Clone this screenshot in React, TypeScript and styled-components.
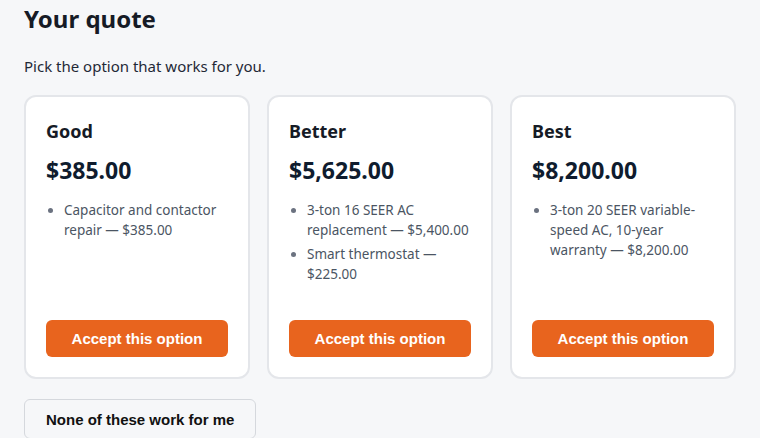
import styled, { createGlobalStyle } from "styled-components";

const GlobalStyle = createGlobalStyle`
    body {
        margin: 0;
        background: #f6f7f9;
        font-family: "Segoe UI", "Noto Sans", "Open Sans", sans-serif;
        color: #111827;
    }
`;

const Page = styled.div`
    padding: 0 24px;
`;

const Title = styled.h1`
    margin: 0;
    padding-top: 2px;
    font-size: 24px;
    line-height: 34px;
    font-weight: 700;
    color: #161b26;
`;

const Subtitle = styled.p`
    margin: 20px 0 0;
    font-size: 15px;
    line-height: 20px;
    color: #1f2937;
`;

const Options = styled.div`
    display: grid;
    grid-template-columns: repeat(3, 1fr);
    gap: 17px;
    margin-top: 19px;
`;

const Card = styled.div`
    display: flex;
    flex-direction: column;
    height: 284px;
    box-sizing: border-box;
    padding: 20px 20px 20px;
    background: #ffffff;
    border: 2px solid #e4e6ea;
    border-radius: 12px;
`;

const Tier = styled.h2`
    margin: 2px 0 0;
    font-size: 18px;
    line-height: 24px;
    font-weight: 700;
    color: #161b26;
`;

const Price = styled.div`
    margin-top: 12px;
    font-size: 23px;
    line-height: 30px;
    font-weight: 700;
    color: #0f1c2e;
`;

const Items = styled.ul`
    margin: 15px 0 0;
    padding-left: 18px;
    font-size: 13.5px;
    line-height: 20px;
    color: #4b5563;

    li {
        margin-bottom: 4px;
    }
    li::marker {
        color: #6b7280;
    }
`;

const AcceptButton = styled.button`
    margin-top: auto;
    height: 37px;
    border: none;
    border-radius: 6px;
    background: #e8641e;
    color: #ffffff;
    font-family: "Liberation Sans", Arial, sans-serif;
    font-size: 15px;
    font-weight: 700;
    cursor: pointer;
`;

const DeclineButton = styled.button`
    margin-top: 20px;
    height: 40px;
    padding: 0 21px;
    border: 1px solid #d5d8dd;
    border-radius: 6px;
    background: #f6f7f9;
    color: #111111;
    font-family: "Liberation Sans", Arial, sans-serif;
    font-size: 15px;
    font-weight: 700;
    cursor: pointer;
`;

const options = [
    { tier: "Good", price: "$385.00", items: ["Capacitor and contactor repair — $385.00"] },
    {
        tier: "Better",
        price: "$5,625.00",
        items: ["3-ton 16 SEER AC replacement — $5,400.00", "Smart thermostat — $225.00"],
    },
    {
        tier: "Best",
        price: "$8,200.00",
        items: ["3-ton 20 SEER variable-speed AC, 10-year warranty — $8,200.00"],
    },
];

const App = () => {
    return (
        <Page>
            <GlobalStyle />
            <Title>Your quote</Title>
            <Subtitle>Pick the option that works for you.</Subtitle>
            <Options>
                {options.map((o) => (
                    <Card key={o.tier}>
                        <Tier>{o.tier}</Tier>
                        <Price>{o.price}</Price>
                        <Items>
                            {o.items.map((i) => (
                                <li key={i}>{i}</li>
                            ))}
                        </Items>
                        <AcceptButton>Accept this option</AcceptButton>
                    </Card>
                ))}
            </Options>
            <DeclineButton>None of these work for me</DeclineButton>
        </Page>
    );
};

export default App;
